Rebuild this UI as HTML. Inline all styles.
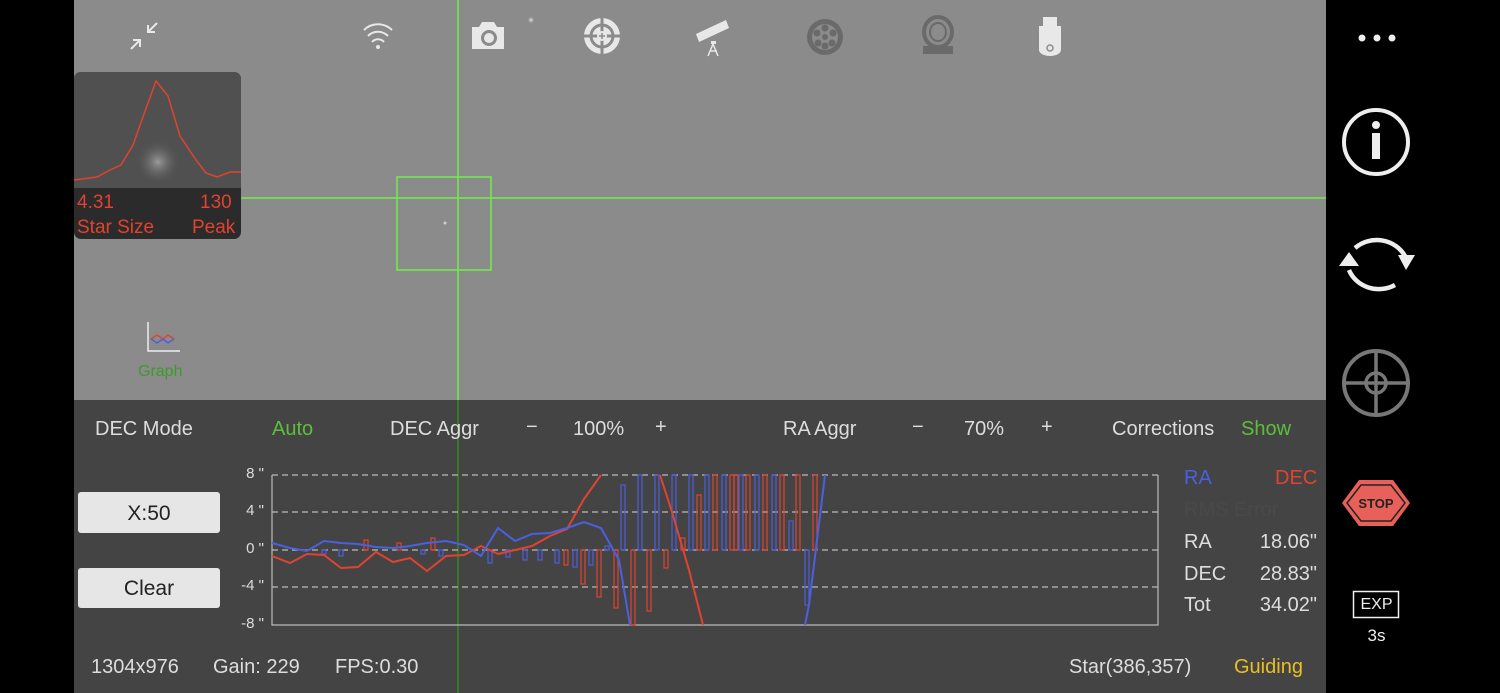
<!DOCTYPE html>
<html><head><meta charset="utf-8"><style>
*{margin:0;padding:0;box-sizing:border-box}
body{width:1500px;height:693px;overflow:hidden;background:#000;font-family:"Liberation Sans",sans-serif;position:relative}
.a{position:absolute;white-space:nowrap}
.t{font-size:20px;color:#ddd}
</style></head><body>
<div class="a" style="left:74px;top:0;width:1252px;height:400px;background:#8b8b8b"></div>
<div class="a" style="left:74px;top:400px;width:1252px;height:293px;background:#444"></div>

<svg class="a" style="left:0;top:0" width="1500" height="693">
 <defs><radialGradient id="g" cx="0.5" cy="0.5" r="0.5"><stop offset="0" stop-color="#9a9a9a"/><stop offset="1" stop-color="#555" stop-opacity="0"/></radialGradient>
 <radialGradient id="s" cx="0.5" cy="0.5" r="0.5"><stop offset="0" stop-color="#eee"/><stop offset="1" stop-color="#8b8b8b" stop-opacity="0"/></radialGradient></defs>
 <circle cx="531" cy="20" r="4" fill="url(#s)"/>
 <circle cx="445" cy="223" r="1.5" fill="#ccc"/>
 <line x1="458" y1="0" x2="458" y2="400" stroke="#6cf04a" stroke-width="1.5"/>
 <line x1="458" y1="400" x2="458" y2="693" stroke="#2e8a1e" stroke-width="1.5"/>
 <line x1="241" y1="198" x2="1326" y2="198" stroke="#6cf04a" stroke-width="1.5"/>
 <rect x="397" y="177" width="94" height="93" fill="none" stroke="#6cf04a" stroke-width="1.5"/>
 <rect x="74" y="72" width="167" height="167" rx="7" fill="#2b2b2b"/>
 <path d="M74 79a7 7 0 0 1 7-7h153a7 7 0 0 1 7 7v109H74z" fill="#505050"/>
 <circle cx="158" cy="162" r="22" fill="url(#g)"/>
 <path d="M74 180L97 177 110 170 121 165 133 145 144 114 156 81 168 96 180 136 196 160 206 173 217 177 230 172 241 172" fill="none" stroke="#e0432f" stroke-width="1.5"/>
 <path d="M148 322V351H180" fill="none" stroke="#eee" stroke-width="1.5"/>
 <path d="M151 339l6-4 6 4 5-4 6 4" fill="none" stroke="#e0432f" stroke-width="1.5"/>
 <path d="M151 339l6 4 6-4 5 4 6-4" fill="none" stroke="#4a60e0" stroke-width="1.5"/>
 <g fill="none" stroke="#e8e8e8" stroke-width="2">
  <path d="M157 23l-9 9M148 25v7h7M131 49l9-9M140 47v-7h-7"/>
  <path d="M364 30a20 20 0 0 1 28 0M368 36a14 14 0 0 1 20 0M372 42a8 8 0 0 1 12 0"/>
 </g>
 <circle cx="378" cy="47" r="2" fill="#e8e8e8"/>
 <path d="M472 27h7l3-5h12l3 5h7v22h-32z" fill="#e8e8e8"/>
 <circle cx="489" cy="38" r="6.5" fill="none" stroke="#8b8b8b" stroke-width="3"/>
 <circle cx="602" cy="36" r="18" fill="#e8e8e8"/>
 <circle cx="602" cy="36" r="11" fill="none" stroke="#8b8b8b" stroke-width="3"/>
 <path d="M584 36h36M602 18v36" stroke="#8b8b8b" stroke-width="3"/>
 <circle cx="602" cy="36" r="5" fill="#e8e8e8"/><path d="M599 36h6M602 33v6" stroke="#8b8b8b" stroke-width="1.5"/>
 <g fill="#e8e8e8"><path d="M696 34l30-14 3 8-30 14z"/><rect x="711" y="41" width="5" height="3"/></g>
 <path d="M713 44l-5 12M713 44l5 12M710 51h7" stroke="#e8e8e8" stroke-width="1.5" fill="none"/>
 <circle cx="825" cy="37" r="18" fill="#6a6a6a"/>
 <circle cx="825" cy="37" r="13" fill="#8b8b8b"/>
 <g fill="#6a6a6a"><circle cx="825" cy="37" r="3"/><circle cx="825" cy="28" r="3.5"/><circle cx="825" cy="46" r="3.5"/><circle cx="817" cy="33" r="3.5"/><circle cx="833" cy="33" r="3.5"/><circle cx="818" cy="43" r="3.5"/><circle cx="832" cy="43" r="3.5"/></g>
 <ellipse cx="938" cy="32" rx="14" ry="15" fill="none" stroke="#6a6a6a" stroke-width="4"/>
 <ellipse cx="938" cy="32" rx="8" ry="9" fill="none" stroke="#6a6a6a" stroke-width="2"/>
 <rect x="923" y="46" width="30" height="8" fill="#6a6a6a"/>
 <rect x="1043" y="17" width="14" height="10" fill="#e8e8e8"/>
 <path d="M1039 26h22v24a11 6 0 0 1-22 0z" fill="#e8e8e8"/>
 <circle cx="1050" cy="48" r="3" fill="none" stroke="#8b8b8b" stroke-width="1.5"/>
 <g stroke="#bbb" stroke-width="1.2" stroke-dasharray="6 4">
  <line x1="272" y1="475" x2="1158" y2="475"/><line x1="272" y1="512" x2="1158" y2="512"/><line x1="272" y1="550" x2="1158" y2="550"/><line x1="272" y1="587" x2="1158" y2="587"/>
 </g>
 <path d="M272 475V625H1158V475" fill="none" stroke="#bbb" stroke-width="1.2"/>
 <g fill="none" stroke="#e0432f" stroke-width="1.2">
  <rect x="364" y="540" width="4" height="10"/><rect x="397" y="543" width="4" height="7"/><rect x="431" y="538" width="4" height="12"/>
  <rect x="564" y="550" width="4" height="15"/><rect x="581" y="550" width="4" height="34"/><rect x="597" y="550" width="4" height="47"/><rect x="614" y="550" width="4" height="58"/><rect x="631" y="550" width="4" height="75"/><rect x="647" y="550" width="4" height="61"/><rect x="664" y="550" width="4" height="18"/>
  <rect x="681" y="538" width="4" height="12"/><rect x="697" y="495" width="4" height="55"/>
  <rect x="713" y="475" width="4" height="75"/><rect x="730" y="475" width="4" height="75"/><rect x="734" y="475" width="4" height="75"/><rect x="746" y="475" width="4" height="75"/><rect x="763" y="475" width="4" height="75"/><rect x="780" y="475" width="4" height="75"/><rect x="796" y="475" width="4" height="75"/><rect x="813" y="475" width="4" height="75"/>
 </g>
 <g fill="none" stroke="#4a60e0" stroke-width="1.2">
  <rect x="322" y="550" width="4" height="4"/><rect x="339" y="550" width="4" height="6"/><rect x="421" y="550" width="4" height="4"/><rect x="439" y="550" width="4" height="6"/><rect x="488" y="550" width="4" height="13"/><rect x="506" y="550" width="4" height="7"/><rect x="523" y="550" width="4" height="10"/><rect x="538" y="550" width="4" height="10"/><rect x="555" y="550" width="4" height="13"/><rect x="573" y="550" width="4" height="17"/><rect x="589" y="550" width="4" height="15"/><rect x="605" y="546" width="4" height="4"/>
  <rect x="621" y="485" width="4" height="65"/><rect x="638" y="475" width="4" height="75"/><rect x="655" y="475" width="4" height="75"/><rect x="672" y="475" width="4" height="75"/><rect x="689" y="475" width="4" height="75"/><rect x="705" y="475" width="4" height="75"/><rect x="722" y="475" width="4" height="75"/><rect x="739" y="475" width="4" height="75"/><rect x="755" y="475" width="4" height="75"/><rect x="772" y="475" width="4" height="75"/><rect x="789" y="521" width="4" height="29"/><rect x="805" y="550" width="4" height="55"/>
 </g>
 <polyline fill="none" stroke="#e0432f" stroke-width="2" points="272,556 290,563 307,554 324,555 341,568 358,567 376,552 393,562 410,558 427,571 446,556 464,555 481,546 498,554 515,550 532,546 550,536 567,529 584,499 601,475"/>
 <polyline fill="none" stroke="#e0432f" stroke-width="2" points="660,475 672,512 689,570 703,625"/>
 <polyline fill="none" stroke="#4a60e0" stroke-width="2" points="272,543 290,548 307,551 324,541 341,543 358,544 376,547 393,548 410,546 427,543 446,541 464,545 481,556 498,528 515,541 532,534 550,533 567,528 584,522 601,528 619,560 630,625"/>
 <polyline fill="none" stroke="#4a60e0" stroke-width="2" points="805,625 809,605 825,475"/>
 <g fill="#eee"><circle cx="1362" cy="38" r="3.5"/><circle cx="1377" cy="38" r="3.5"/><circle cx="1392" cy="38" r="3.5"/></g>
 <circle cx="1376" cy="142" r="32" fill="none" stroke="#eee" stroke-width="4"/>
 <circle cx="1376" cy="125" r="4" fill="#eee"/><rect x="1372" y="133" width="8" height="26" fill="#eee"/>
 <path d="M1355 248A32 30 0 0 1 1405 256" fill="none" stroke="#eee" stroke-width="4.5"/>
 <path d="M1395 285A32 30 0 0 1 1349 270" fill="none" stroke="#eee" stroke-width="4.5"/>
 <path d="M1339 266l10-14 10 14zM1398 255h17l-9 15z" fill="#eee"/>
 <circle cx="1376" cy="383" r="32" fill="none" stroke="#777" stroke-width="4"/>
 <circle cx="1376" cy="383" r="10" fill="none" stroke="#777" stroke-width="3.5"/>
 <path d="M1344 383h64M1376 351v64" stroke="#777" stroke-width="3.5"/>
 <path d="M1359 480h34l17 23-17 23h-34l-17-23z" fill="#e8605a"/>
 <path d="M1361 485h30l14 18-14 18h-30l-14-18z" fill="none" stroke="#222" stroke-width="1.5"/>
 <text x="1376" y="508" font-family="Liberation Sans" font-weight="bold" font-size="13" text-anchor="middle" fill="#222">STOP</text>
 <rect x="1353.5" y="591.5" width="45" height="26" fill="none" stroke="#eee" stroke-width="1.5"/>
</svg>

<div class="a" style="left:77px;top:192px;font-size:19px;color:#e0432f">4.31</div>
<div class="a" style="left:200px;top:192px;font-size:19px;color:#e0432f">130</div>
<div class="a" style="left:77px;top:217px;font-size:19px;color:#e0432f">Star Size</div>
<div class="a" style="left:192px;top:217px;font-size:19px;color:#e0432f">Peak</div>
<div class="a" style="left:138px;top:363px;font-size:16px;color:#3c9a2c">Graph</div>

<div class="a t" style="left:95px;top:418px">DEC Mode</div>
<div class="a t" style="left:272px;top:418px;color:#5cbf3c">Auto</div>
<div class="a t" style="left:390px;top:418px">DEC Aggr</div>
<div class="a t" style="left:526px;top:416px">−</div>
<div class="a t" style="left:573px;top:418px">100%</div>
<div class="a t" style="left:655px;top:416px">+</div>
<div class="a t" style="left:783px;top:418px">RA Aggr</div>
<div class="a t" style="left:912px;top:416px">−</div>
<div class="a t" style="left:964px;top:418px">70%</div>
<div class="a t" style="left:1041px;top:416px">+</div>
<div class="a t" style="left:1112px;top:418px">Corrections</div>
<div class="a t" style="left:1241px;top:418px;color:#5cbf3c">Show</div>

<div class="a" style="left:78px;top:492px;width:142px;height:41px;background:#e6e6e6;border-radius:3px;font-size:21px;color:#222;text-align:center;line-height:43px">X:50</div>
<div class="a" style="left:78px;top:568px;width:142px;height:40px;background:#e6e6e6;border-radius:3px;font-size:21px;color:#222;text-align:center;line-height:42px">Clear</div>

<div class="a" style="left:224px;top:465px;width:40px;text-align:right;font-size:15px;color:#ddd">8 "</div>
<div class="a" style="left:224px;top:502px;width:40px;text-align:right;font-size:15px;color:#ddd">4 "</div>
<div class="a" style="left:224px;top:540px;width:40px;text-align:right;font-size:15px;color:#ddd">0 "</div>
<div class="a" style="left:224px;top:577px;width:40px;text-align:right;font-size:15px;color:#ddd">-4 "</div>
<div class="a" style="left:224px;top:615px;width:40px;text-align:right;font-size:15px;color:#ddd">-8 "</div>

<div class="a t" style="left:1184px;top:467px;color:#4a60e0">RA</div>
<div class="a t" style="left:1275px;top:467px;color:#e0432f">DEC</div>
<div class="a t" style="left:1184px;top:499px;color:#494949">RMS Error</div>
<div class="a t" style="left:1184px;top:531px">RA</div>
<div class="a t" style="left:1184px;top:563px">DEC</div>
<div class="a t" style="left:1184px;top:594px">Tot</div>
<div class="a t" style="left:1200px;top:531px;width:117px;text-align:right">18.06"</div>
<div class="a t" style="left:1200px;top:563px;width:117px;text-align:right">28.83"</div>
<div class="a t" style="left:1200px;top:594px;width:117px;text-align:right">34.02"</div>

<div class="a t" style="left:91px;top:656px">1304x976</div>
<div class="a t" style="left:213px;top:656px">Gain: 229</div>
<div class="a t" style="left:335px;top:656px">FPS:0.30</div>
<div class="a t" style="left:1069px;top:656px">Star(386,357)</div>
<div class="a t" style="left:1234px;top:656px;color:#e8c020">Guiding</div>

<div class="a" style="left:1354px;top:596px;width:45px;text-align:center;font-size:16px;color:#eee">EXP</div>
<div class="a" style="left:1354px;top:626px;width:45px;text-align:center;font-size:17px;color:#eee">3s</div>
</body></html>
